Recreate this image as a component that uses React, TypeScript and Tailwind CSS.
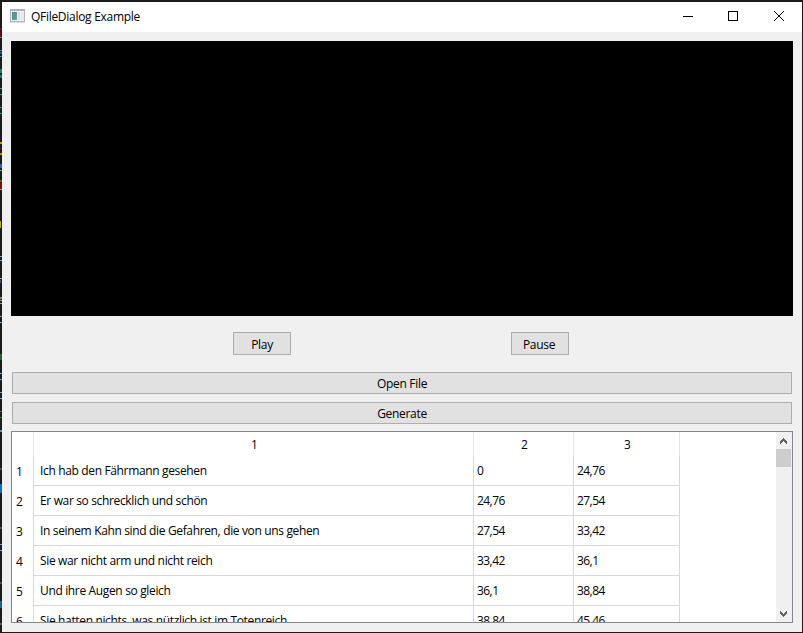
import React from "react";

type Mark = { y: number; h: number; w?: number; color: string };

// Slivers of the editor behind the window's left edge.
const marks: Mark[] = [
  { y: 28, h: 2, color: "#70161a" },
  { y: 31, h: 6, w: 1, color: "#6b0e10" },
  { y: 37, h: 1, color: "#a06a9a" },
  { y: 50, h: 1, color: "#3a9a86" },
  { y: 52, h: 2, color: "#274f8c" },
  { y: 56, h: 1, color: "#3a9a86" },
  { y: 69, h: 4, color: "#287a6c" },
  { y: 75, h: 3, color: "#2b6f78" },
  { y: 88, h: 1, color: "#3a9a86" },
  { y: 94, h: 1, color: "#3a9a86" },
  { y: 107, h: 1, color: "#3a9a86" },
  { y: 113, h: 1, color: "#3a9a86" },
  { y: 142, h: 2, color: "#b99c18" },
  { y: 148, h: 1, color: "#7c1715" },
  { y: 153, h: 2, color: "#b98f18" },
  { y: 164, h: 4, color: "#315ea0" },
  { y: 170, h: 1, color: "#6f9fc5" },
  { y: 180, h: 2, color: "#855016" },
  { y: 183, h: 6, color: "#701313" },
  { y: 189, h: 1, color: "#a7a57a" },
  { y: 221, h: 7, w: 1, color: "#c5a509" },
  { y: 256, h: 1, color: "#6fa6c8" },
  { y: 260, h: 1, color: "#6fa6c8" },
  { y: 278, h: 1, color: "#b9a955" },
  { y: 280, h: 3, w: 1, color: "#355b9b" },
  { y: 297, h: 2, color: "#6b897c" },
  { y: 300, h: 1, color: "#a4a66c" },
  { y: 303, h: 1, color: "#a4a66c" },
  { y: 316, h: 1, color: "#6fa6c8" },
  { y: 322, h: 1, color: "#6fa6c8" },
  { y: 354, h: 6, color: "#295c35" },
  { y: 373, h: 1, color: "#6fa6c8" },
  { y: 379, h: 1, color: "#6fa6c8" },
  { y: 392, h: 1, color: "#6fa6c8" },
  { y: 398, h: 1, color: "#6fa6c8" },
  { y: 411, h: 1, color: "#467638" },
  { y: 417, h: 1, color: "#467638" },
  { y: 430, h: 2, color: "#6c8f9c" },
  { y: 468, h: 2, color: "#365c30" },
  { y: 484, h: 9, color: "#2468ac" },
  { y: 527, h: 2, color: "#365c30" },
  { y: 544, h: 1, color: "#6fa6c8" },
  { y: 550, h: 1, color: "#6fa6c8" },
  { y: 582, h: 2, color: "#365c30" },
  { y: 601, h: 7, color: "#1b5caa" },
  { y: 623, h: 2, color: "#695332" },
];

const rows = [
  ["Ich hab den Fährmann gesehen", "0", "24,76"],
  ["Er war so schrecklich und schön", "24,76", "27,54"],
  ["In seinem Kahn sind die Gefahren, die von uns gehen", "27,54", "33,42"],
  ["Sie war nicht arm und nicht reich", "33,42", "36,1"],
  ["Und ihre Augen so gleich", "36,1", "38,84"],
  ["Sie hatten nichts, was nützlich ist im Totenreich", "38,84", "45,46"],
];

function TitleBar() {
  return (
    <header className="flex h-[30px] shrink-0 items-start bg-white">
      <svg className="mt-[7px] ml-2 shrink-0" width="16" height="14" shapeRendering="crispEdges">
        <defs>
          <linearGradient id="pane" x1="0" y1="0" x2="1" y2="1">
            <stop offset="0" stopColor="#4c86b4" />
            <stop offset="1" stopColor="#5fab79" />
          </linearGradient>
        </defs>
        <rect width="15" height="13" fill="#aeb3b9" />
        <rect x="1" y="2" width="13" height="10" fill="#f4f4f5" />
        <rect x="2" y="3" width="5" height="8" fill="url(#pane)" />
        <rect x="8" y="3" width="2" height="8" fill="#d8dadd" />
        <rect x="11" y="3" width="3" height="8" fill="#e8e8ea" />
        <rect y="13" width="15" height="1" fill="#dedede" />
      </svg>
      <span className="ml-[5px] h-[30px] leading-[30px] tracking-[-0.29px]">QFileDialog Example</span>
      <svg className="mt-2 mr-[18px] ml-auto" width="101" height="13" fill="none" stroke="#000">
        <path d="M0 6.5H10" shapeRendering="crispEdges" />
        <path d="M45.5 1.5H54.5V10.5H45.5Z" shapeRendering="crispEdges" />
        <path d="M91 1L101 11M101 1L91 11" />
      </svg>
    </header>
  );
}

function Button({ children, className }: { children: string; className: string }) {
  return (
    <button className={`flex items-center justify-center border border-[#adadad] bg-[#e1e1e1] tracking-[-0.3px] ${className}`}>
      {children}
    </button>
  );
}

function Table() {
  return (
    <div className="mt-[7px] ml-[9px] flex h-[192px] w-[782px] overflow-hidden border border-[#828790] bg-white">
      <div className="flex flex-col">
        <div className="flex h-6 leading-[25px] *:border-r *:border-[#e5e5e5] *:text-center">
          <span className="w-[22px]" />
          <span className="w-[440px] pl-0.5">1</span>
          <span className="w-[100px] pl-0.5">2</span>
          <span className="w-[106px] pl-0.5">3</span>
        </div>
        {rows.map(([text, start, end], i) => (
          <div key={i} className="flex h-[30px] shrink-0 leading-[29px] *:border-r *:border-[#d8d8d8]">
            <span className="w-[22px] border-[#e5e5e5] pl-1 leading-[31px]">{i + 1}</span>
            <span className="w-[440px] border-b pl-1.5 tracking-[-0.35px] whitespace-nowrap">{text}</span>
            <span className="w-[100px] border-b pl-[3px] tracking-[-0.55px]">{start}</span>
            <span className="w-[106px] border-b pl-[3px] tracking-[-0.55px]">{end}</span>
          </div>
        ))}
      </div>
      <div className="ml-auto flex w-4 flex-col bg-[#f0f0f0]">
        <svg width="16" height="17" fill="#606060" shapeRendering="crispEdges">
          <path d="M7 6h1v1h1v1h1v1h1v3h-1v-1h-1v-1h-1v-1h-1v1h-1v1h-1v1h-1v-3h1v-1h1v-1h1z" />
        </svg>
        <div className="h-[18px] w-[15px] bg-[#cdcdcd]" />
        <svg className="mt-auto" width="16" height="17" fill="#606060" shapeRendering="crispEdges">
          <path d="M7 12h1v-1h1v-1h1v-1h1v-3h-1v1h-1v1h-1v1h-1v-1h-1v-1h-1v-1h-1v3h1v1h1v1h1z" />
        </svg>
      </div>
    </div>
  );
}

export default function App() {
  return (
    <div className="flex h-[633px] w-[803px] flex-col overflow-hidden bg-[#1b1b1d] font-['Open_Sans',sans-serif] text-[12px] text-black">
      <div className="mt-0.5 flex h-[630px]">
        <div className="relative w-0.5 shrink-0">
          {marks.map((m) => (
            <i key={m.y} className="absolute left-0" style={{ top: m.y - 2, height: m.h, width: m.w ?? 2, background: m.color }} />
          ))}
        </div>
        <main className="flex w-[800px] flex-col bg-[#f0f0f0]">
          <TitleBar />
          <div className="mt-[9px] ml-[9px] h-[275px] w-[782px] shrink-0 bg-black" />
          <div className="mt-4 flex gap-[220px] pl-[231px]">
            <Button className="h-[23px] w-[58px] pt-[3px]">Play</Button>
            <Button className="h-[23px] w-[58px] pt-[3px] pr-0.5">Pause</Button>
          </div>
          <Button className="mt-[17px] ml-2.5 h-[22px] w-[780px] pt-0.5">Open File</Button>
          <Button className="mt-2 ml-2.5 h-[22px] w-[780px] pt-0.5">Generate</Button>
          <Table />
        </main>
      </div>
    </div>
  );
}
